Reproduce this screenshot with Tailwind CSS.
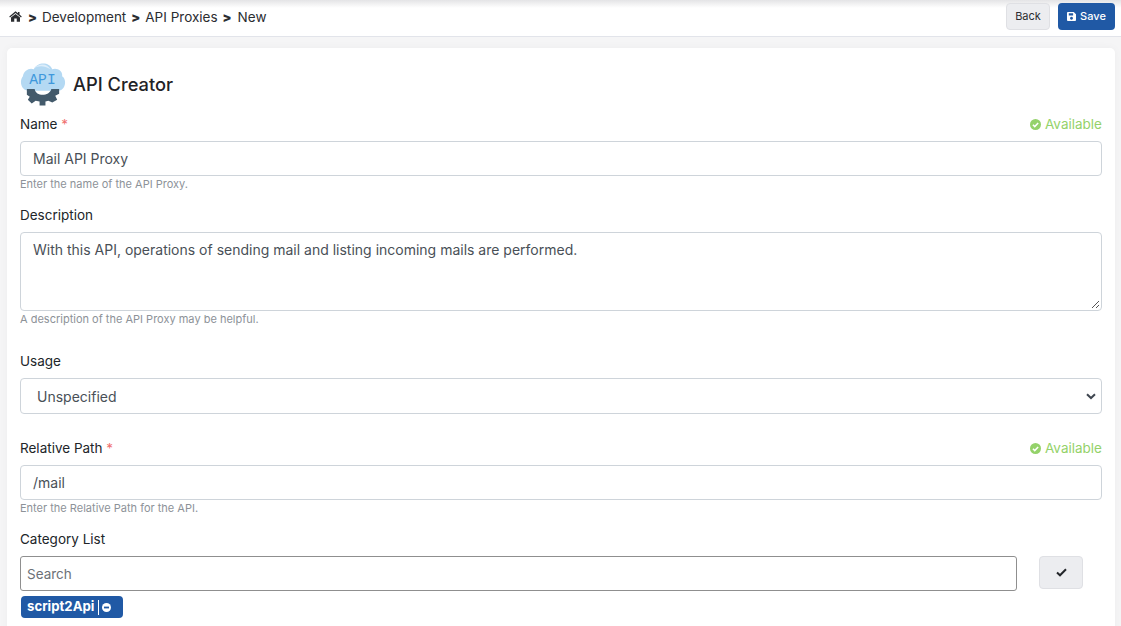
<!DOCTYPE html>
<html lang="en">
  <head>
    <meta charset="UTF-8" />
    <title>API Creator</title>
    <script src="https://cdn.jsdelivr.net/npm/@tailwindcss/browser@4"></script>
  </head>
  <body class="h-[626px] overflow-hidden bg-[#f5f5f6] font-['Inter','Liberation_Sans',sans-serif] text-[#212529]">
    <!-- Top bar -->
    <div class="h-[37px] flex items-center justify-between pl-[9px] pr-[6px] bg-gradient-to-b from-[#e4e4e6] via-white via-[22%] to-white border-b border-[#e2e4ea]">
      <div class="flex items-center gap-[5px] text-[13.5px] leading-[20px] -mt-[3px] text-[#2b2d31]">
        <svg class="w-[13px] h-[11px] mr-[1px]" viewBox="0 0 26 22" fill="#2b2d31"><path d="M13 0.5 L0.5 11 L2 13 L13 4 L24 13 L25.5 11 L21 7.2 V2 H18 V4.7 Z" /><path d="M13 5.8 L4 13.2 V21.5 H10.5 V15 H15.5 V21.5 H22 V13.2 Z" /></svg>
        <b class="text-[13px] font-black">&gt;</b><span>Development</span>
        <b class="text-[13px] font-black">&gt;</b><span>API Proxies</span>
        <b class="text-[13px] font-black">&gt;</b><span class="ml-[1px]">New</span>
      </div>
      <div class="flex items-center gap-[8px] -mt-[3px]">
        <button class="w-[44px] h-[27px] rounded-[4px] bg-[#ecedf0] border border-[#dfe0e4] text-[11px] text-[#2b2d31]">Back</button>
        <button class="w-[57px] h-[27px] rounded-[4px] bg-[#2059a5] text-[11px] font-medium text-white flex items-center justify-center gap-[4px]">
          <svg class="w-[9px] h-[9px]" viewBox="0 0 10 10" fill="#fff"><path d="M1 0 H7.5 L10 2.5 V9 a1 1 0 0 1 -1 1 H1 a1 1 0 0 1 -1 -1 V1 a1 1 0 0 1 1 -1 Z M2 1.5 V3.8 H6.8 V1.5 Z M5 5.3 a1.6 1.6 0 1 0 0.01 0 Z" fill-rule="evenodd" /></svg>
          Save
        </button>
      </div>
    </div>

    <!-- Card -->
    <div class="mt-[11px] ml-[7px] w-[1108px] h-[600px] bg-white rounded-[5px] shadow-[0_0_8px_rgba(0,0,0,0.04)] pl-[13px] pr-[13px] pt-[13px]">
      <div class="flex items-center gap-[7px] h-[46px]">
        <svg class="w-[46px] h-[46px]" viewBox="0 0 47 46">
          <path d="M8 30 C1 29 -1 20 3 15 C4 9 10 6 14 8 C18 0 30 0 33 8 C38 6 44 10 43 15 C48 18 47 29 39 30 Z" fill="#b4d9f3" />
          <path d="M14 7 C20 1 28 2 31 8 C25 4 19 4 14 7 Z" fill="#dcedfa" />
          <text x="23" y="23" text-anchor="middle" font-size="15" font-family="Liberation Mono, monospace" fill="#3f98dc">API</text>
          <path d="M7 28 H15 C16 36 30 36 32 28 H40 L40 33 L36 35 L38 39 L33 42 L29 40 L26 41 L26 45 L20 45 L20 41 L16 40 L12 43 L8 39 L10 36 L7 34 Z" fill="#435a6b" />
        </svg>
        <h1 class="text-[18.3px] font-medium text-[#1f2226] mt-[1px]">API Creator</h1>
      </div>

      <div class="flex items-center justify-between h-[20px] mt-[7px] text-[13.5px]">
        <label>Name <span class="text-[#f0706f]">*</span></label>
        <span class="flex items-center gap-[4px] text-[#94d26a]">
          <svg class="w-[11px] h-[11px]" viewBox="0 0 12 12"><circle cx="6" cy="6" r="6" fill="#94d26a" /><path d="M3.2 6.2 L5.2 8.2 L8.9 4.4" stroke="#fff" stroke-width="1.7" fill="none" /></svg>
          Available
        </span>
      </div>
      <div class="mt-[7px] h-[35px] w-[1082px] border border-[#ced4da] rounded-[4px] px-[12px] flex items-center text-[14px] text-[#495057]">Mail API Proxy</div>
      <p class="h-[16px] leading-[16px] text-[11px] text-[#8d9298]">Enter the name of the API Proxy.</p>

      <label class="block mt-[13px] h-[20px] leading-[20px] text-[13.5px]">Description</label>
      <div class="relative mt-[7px] h-[79px] w-[1082px] border border-[#ced4da] rounded-[4px] px-[12px] pt-[6px] text-[14px] leading-[22px] text-[#495057]">
        With this API, operations of sending mail and listing incoming mails are performed.
        <svg class="absolute right-[1px] bottom-[1px] w-[9px] h-[9px]" viewBox="0 0 9 9" stroke="#555"><path d="M1 8 L8 1 M5 8 L8 5" /></svg>
      </div>
      <p class="h-[16px] leading-[16px] text-[11px] text-[#8d9298]">A description of the API Proxy may be helpful.</p>

      <label class="block mt-[24px] h-[20px] leading-[20px] text-[13.5px]">Usage</label>
      <div class="mt-[7px] h-[36px] w-[1082px] border border-[#ced4da] rounded-[4px] pl-[16px] pr-[5px] flex items-center justify-between text-[14px] text-[#495057]">
        Unspecified
        <svg class="w-[10px] h-[7px]" viewBox="0 0 10 7" fill="none" stroke="#3f4650" stroke-width="2"><path d="M1 1.2 L5 5 L9 1.2" /></svg>
      </div>

      <div class="flex items-center justify-between h-[20px] mt-[24px] text-[13.5px]">
        <label>Relative Path <span class="text-[#f0706f]">*</span></label>
        <span class="flex items-center gap-[4px] text-[#94d26a]">
          <svg class="w-[11px] h-[11px]" viewBox="0 0 12 12"><circle cx="6" cy="6" r="6" fill="#94d26a" /><path d="M3.2 6.2 L5.2 8.2 L8.9 4.4" stroke="#fff" stroke-width="1.7" fill="none" /></svg>
          Available
        </span>
      </div>
      <div class="mt-[7px] h-[35px] w-[1082px] border border-[#ced4da] rounded-[4px] px-[12px] flex items-center text-[14px] text-[#495057]">/mail</div>
      <p class="h-[16px] leading-[16px] text-[11px] text-[#8d9298]">Enter the Relative Path for the API.</p>

      <label class="block mt-[13px] h-[20px] leading-[20px] text-[13.5px]">Category List</label>
      <div class="mt-[7px] flex items-start">
        <div class="h-[35px] w-[997px] border border-[#8f8f8f] rounded-[3px] px-[6px] pt-[1px] flex items-center text-[13.5px] text-[#6c7177]">Search</div>
        <button class="ml-[22px] w-[44px] h-[33px] rounded-[4px] bg-[#ecedf0] border border-[#dfe0e4] flex items-center justify-center">
          <svg class="w-[11px] h-[9px]" viewBox="0 0 11 9" fill="none" stroke="#23262a" stroke-width="2"><path d="M1 4.5 L4 7.3 L10 1.3" /></svg>
        </button>
      </div>
      <div class="mt-[5px] ml-[1px] inline-flex items-center h-[22px] w-[102px] rounded-[4px] bg-[#2059a5] pl-[6px] text-[13.2px] font-bold text-white">
        script2Api
        <span class="ml-[4px] h-[15px] border-l border-white"></span>
        <svg class="ml-[3px] w-[9px] h-[9px]" viewBox="0 0 10 10"><circle cx="5" cy="5" r="5" fill="#fff" /><rect x="2.2" y="4" width="5.6" height="2" fill="#2059a5" /></svg>
      </div>
    </div>
  </body>
</html>
